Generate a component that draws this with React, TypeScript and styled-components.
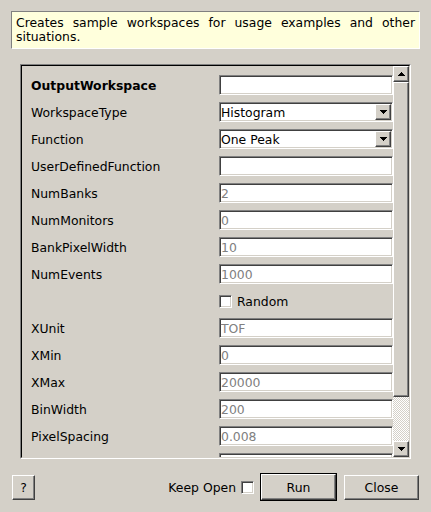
import * as React from "react";
import styled, { createGlobalStyle, css } from "styled-components";

const GlobalStyle = createGlobalStyle`
  html, body {
    margin: 0;
    padding: 0;
    background: #d4d0c8;
  }
  body {
    font-family: "DejaVu Sans", "Liberation Sans", sans-serif;
    font-size: 12.4px;
    color: #000;
  }
`;

const raised = css`
  box-sizing: border-box;
  background: #d4d0c8;
  border: 1px solid;
  border-color: #fff #404040 #404040 #fff;
  box-shadow: inset -1px -1px #808080;
`;

const sunken = css`
  box-sizing: border-box;
  background: #fff;
  border: 1px solid;
  border-color: #808080 #fff #fff #808080;
  box-shadow: inset 1px 1px #404040, inset -1px -1px #d4d0c8;
`;

const Dialog = styled.div`
  width: 431px;
  height: 512px;
  box-sizing: border-box;
  padding: 11px 11px 0;
  display: flex;
  flex-direction: column;
`;

const Description = styled.div`
  box-sizing: border-box;
  height: 38px;
  padding: 4px 4px;
  line-height: 14px;
  background: #ffffdc;
  border: 1px solid;
  border-color: #808080 #fff #fff #808080;
  text-align: justify;
`;

const Panel = styled.div`
  box-sizing: border-box;
  height: 395px;
  margin: 15px 9px 0;
  border: 1px solid;
  border-color: #808080 #fff #fff #808080;
  display: flex;
`;

const Frame = styled.div`
  flex: 1;
  display: flex;
  min-height: 0;
  border: 1px solid;
  border-color: #000 #d4d0c8 #d4d0c8 #000;
`;

const Viewport = styled.div`
  flex: 1;
  overflow: hidden;
  padding: 6px 0 0 9px;
`;

const Row = styled.div`
  display: grid;
  grid-template-columns: 188px 174px;
  align-items: center;
  height: 20px;
  padding: 3px 0 4px;
`;

const Label = styled.span<{ $bold?: boolean }>`
  font-weight: ${(p) => (p.$bold ? "bold" : "normal")};
  white-space: nowrap;
  padding-top: 1px;
`;

const Field = styled.div<{ $disabled?: boolean }>`
  ${sunken};
  height: 20px;
  padding: 0 1px 0 1px;
  display: flex;
  align-items: center;
  justify-content: space-between;
  white-space: nowrap;
  overflow: hidden;
  color: ${(p) => (p.$disabled ? "#808080" : "#000")};
`;

const ArrowButton = styled.div`
  ${raised};
  width: 16px;
  height: 16px;
  flex: none;
  display: flex;
  align-items: center;
  justify-content: center;
`;

const CheckBox = styled.span`
  ${sunken};
  display: inline-block;
  width: 13px;
  height: 13px;
  flex: none;
`;

const CheckLine = styled.label`
  display: flex;
  align-items: center;
  gap: 5px;
`;

const Scrollbar = styled.div`
  width: 16px;
  display: flex;
  flex-direction: column;
`;

const Thumb = styled.div`
  ${raised};
  height: 315px;
`;

const Track = styled.div`
  flex: 1;
  background-image: repeating-conic-gradient(#fff 0 25%, #d4d0c8 0 50%);
  background-size: 2px 2px;
`;

const Footer = styled.div`
  display: flex;
  align-items: center;
  height: 28px;
  margin-top: 14px;
  padding: 0 1px;
`;

const Spacer = styled.div`
  flex: 1;
`;

const Button = styled.button<{ $width: number; $default?: boolean }>`
  ${raised};
  width: ${(p) => p.$width}px;
  height: ${(p) => (p.$default ? 26 : 25)}px;
  padding: 0;
  font: inherit;
  color: #000;
  outline: ${(p) => (p.$default ? "1px solid #000" : "none")};
`;

const KeepOpen = styled.span`
  margin-right: 5px;
  white-space: nowrap;
`;

const Gap = styled.span<{ $w: number }>`
  width: ${(p) => p.$w}px;
  flex: none;
`;

const Arrow = ({ up }: { up?: boolean }) => (
  <svg width="7" height="4" viewBox="0 0 7 4" shapeRendering="crispEdges">
    <path
      d="M0 0h7v1H0z M1 1h5v1H1z M2 2h3v1H2z M3 3h1v1H3z"
      fill="#000"
      transform={up ? "rotate(180 3.5 2)" : undefined}
    />
  </svg>
);

type Prop = {
  label: string;
  kind: "text" | "combo" | "check";
  value?: string;
  bold?: boolean;
  disabled?: boolean;
};

const props: Prop[] = [
  { label: "OutputWorkspace", kind: "text", bold: true },
  { label: "WorkspaceType", kind: "combo", value: "Histogram" },
  { label: "Function", kind: "combo", value: "One Peak" },
  { label: "UserDefinedFunction", kind: "text" },
  { label: "NumBanks", kind: "text", value: "2", disabled: true },
  { label: "NumMonitors", kind: "text", value: "0", disabled: true },
  { label: "BankPixelWidth", kind: "text", value: "10", disabled: true },
  { label: "NumEvents", kind: "text", value: "1000", disabled: true },
  { label: "", kind: "check", value: "Random" },
  { label: "XUnit", kind: "text", value: "TOF", disabled: true },
  { label: "XMin", kind: "text", value: "0", disabled: true },
  { label: "XMax", kind: "text", value: "20000", disabled: true },
  { label: "BinWidth", kind: "text", value: "200", disabled: true },
  { label: "PixelSpacing", kind: "text", value: "0.008", disabled: true },
  { label: "BankDistanceFromSample", kind: "text", value: "5", disabled: true },
];

const App = (): JSX.Element => (
  <>
    <GlobalStyle />
    <Dialog>
      <Description>
        Creates sample workspaces for usage examples and other situations.
      </Description>
      <Panel>
        <Frame>
          <Viewport>
            {props.map((p, i) => (
              <Row key={i}>
                <Label $bold={p.bold}>{p.label}</Label>
                {p.kind === "check" ? (
                  <CheckLine>
                    <CheckBox />
                    {p.value}
                  </CheckLine>
                ) : (
                  <Field $disabled={p.disabled}>
                    <span>{p.value}</span>
                    {p.kind === "combo" && (
                      <ArrowButton>
                        <Arrow />
                      </ArrowButton>
                    )}
                  </Field>
                )}
              </Row>
            ))}
          </Viewport>
          <Scrollbar>
            <ArrowButton>
              <Arrow up />
            </ArrowButton>
            <Thumb />
            <Track />
            <ArrowButton>
              <Arrow />
            </ArrowButton>
          </Scrollbar>
        </Frame>
      </Panel>
      <Footer>
        <Button $width={23}>?</Button>
        <Spacer />
        <KeepOpen>Keep Open</KeepOpen>
        <CheckBox />
        <Gap $w={7} />
        <Button $width={75} $default>
          Run
        </Button>
        <Gap $w={8} />
        <Button $width={75}>Close</Button>
      </Footer>
    </Dialog>
  </>
);

export default App;
